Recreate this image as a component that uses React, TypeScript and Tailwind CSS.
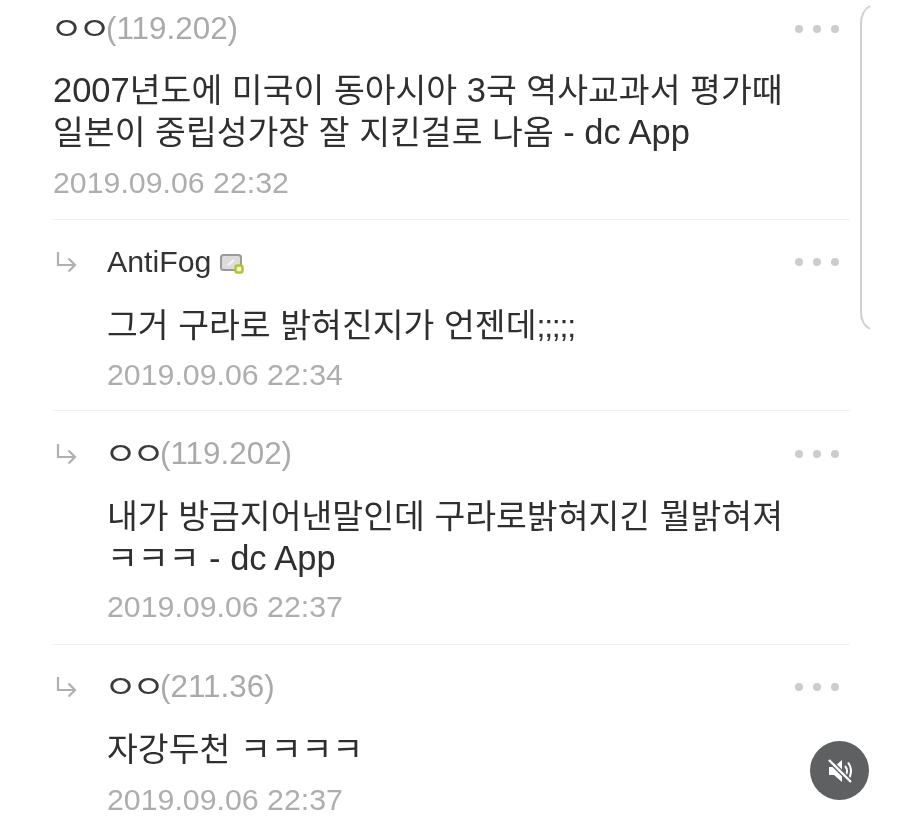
type C = { name: string; ip?: string; lines: string[]; date: string; reply: boolean; badge?: boolean; pt: string; gap: string; datePt: string; pb: string; border: boolean };

const items: C[] = [
  { name: "ㅇㅇ", ip: "(119.202)", lines: ["2007년도에 미국이 동아시아 3국 역사교과서 평가때", "일본이 중립성가장 잘 지킨걸로 나옴 - dc App"], date: "2019.09.06 22:32", reply: false, pt: "pt-[8px]", gap: "pt-[20px]", datePt: "pt-[9px]", pb: "pb-[16px]", border: true },
  { name: "AntiFog", lines: ["그거 구라로 밝혀진지가 언젠데;;;;;"], date: "2019.09.06 22:34", reply: true, badge: true, pt: "pt-[21px]", gap: "pt-[22px]", datePt: "pt-[8px]", pb: "pb-[15px]", border: true },
  { name: "ㅇㅇ", ip: "(119.202)", lines: ["내가 방금지어낸말인데 구라로밝혀지긴 뭘밝혀져", "ㅋㅋㅋ - dc App"], date: "2019.09.06 22:37", reply: true, pt: "pt-[22px]", gap: "pt-[21px]", datePt: "pt-[7px]", pb: "pb-[17px]", border: true },
  { name: "ㅇㅇ", ip: "(211.36)", lines: ["자강두천 ㅋㅋㅋㅋ"], date: "2019.09.06 22:37", reply: true, pt: "pt-[21px]", gap: "pt-[21px]", datePt: "pt-[9px]", pb: "pb-[16px]", border: false },
];

function Dots() {
  return (
    <div className="mr-[11px] flex gap-[10px] pt-[2px]">
      <span className="h-[8px] w-[8px] rounded-full bg-[#cdcdcd]" />
      <span className="h-[8px] w-[8px] rounded-full bg-[#cdcdcd]" />
      <span className="h-[8px] w-[8px] rounded-full bg-[#cdcdcd]" />
    </div>
  );
}

function Badge() {
  return (
    <svg width="27" height="22" viewBox="0 0 27 22" className="ml-[9px] mt-[4px]">
      <rect x="1" y="2" width="20" height="15" rx="2.5" fill="#dcdcdc" stroke="#9a9a9a" strokeWidth="2" />
      <path d="M8 12l6-5" stroke="#f5f5f5" strokeWidth="2" />
      <rect x="15.5" y="12.5" width="7" height="7" rx="2" fill="#f3f5c8" stroke="#b3c230" strokeWidth="2.4" />
    </svg>
  );
}

function Arrow() {
  return (
    <svg width="24" height="24" viewBox="0 0 24 24" fill="none" stroke="#b0b0b0" strokeWidth="2.2">
      <path d="M5 2v13h17" />
      <path d="M15.5 8.5l6.5 6.5-6.5 6.5" />
    </svg>
  );
}

function Latinized({ text }: { text: string }) {
  const parts = text.split(/([A-Za-z0-9\- ]+|;+)/).filter(Boolean);
  return (
    <>
      {parts.map((p, i) => {
        if (/^;+$/.test(p)) return <span key={i} className="text-[32px] leading-none tracking-[-1.2px]">{p}</span>;
        if (/^[A-Za-z0-9\- ]+$/.test(p)) return <span key={i} className="text-[34.5px] leading-none">{p}</span>;
        return <span key={i} className="leading-none">{p}</span>;
      })}
    </>
  );
}

function Row({ c }: { c: C }) {
  return (
    <div className="pl-[53px] pr-[50px]">
      <div className={`flex ${c.pt} ${c.pb} ${c.border ? "border-b border-[#f0f0f0]" : ""}`}>
        {c.reply && (
          <div className="w-[54px] shrink-0 pt-[9px]">
            <Arrow />
          </div>
        )}
        <div className="min-w-0 flex-1">
          <div className="flex items-start justify-between">
            <div className="flex h-[42px] items-center whitespace-nowrap leading-[42px]">
              {c.badge ? (
                <span className="text-[30.3px] text-[#333333]">{c.name}</span>
              ) : (
                <span className="-ml-[3px] inline-block w-[56px] origin-left scale-x-[1.2] text-[30px] tracking-[-4.3px] text-[#3a3a3a]">{c.name}</span>
              )}
              {c.ip && <span className="text-[31.4px] text-[#aaaaaa]">{c.ip}</span>}
              {c.badge && <Badge />}
            </div>
            <div className="pt-[15px]"><Dots /></div>
          </div>
          <div className={`${c.gap} whitespace-nowrap text-[33.5px] leading-[42px] text-[#2f2f2f]`}>
            {c.lines.map((l) => <div key={l}><Latinized text={l} /></div>)}
          </div>
          <div className={`${c.datePt} whitespace-nowrap text-[30.3px] leading-[40px] text-[#aeaeae]`}>{c.date}</div>
        </div>
      </div>
    </div>
  );
}

export default function App() {
  return (
    <div className="relative h-[826px] w-[900px] overflow-hidden bg-white blur-[0.6px]" style={{ fontFamily: '"Liberation Sans", "Noto Sans CJK KR", sans-serif' }}>
      {items.map((c, i) => <Row key={i} c={c} />)}
      <svg className="absolute left-[858px] top-0" width="16" height="336" viewBox="0 0 16 336" fill="none">
        <path d="M12 6Q3 11 3 24V312Q3 324 12 329" stroke="#d0d0d0" strokeWidth="2" />
      </svg>
      <div className="absolute left-[810px] top-[741px] flex h-[59px] w-[59px] items-center justify-center rounded-full bg-[#5f6062]">
        <svg width="28" height="28" viewBox="0 0 28 28" fill="none">
          <path d="M3 10h5l8-7v22l-8-7H3z" fill="#fff" />
          <path d="M19 9c2.5 3 2.5 7 0 10M22 5.5c4 5 4 12 0 17" stroke="#fff" strokeWidth="2" />
          <path d="M2 2l24 24" stroke="#5f6062" strokeWidth="5" />
          <path d="M3 3l22 22" stroke="#fff" strokeWidth="2.4" />
        </svg>
      </div>
    </div>
  );
}
